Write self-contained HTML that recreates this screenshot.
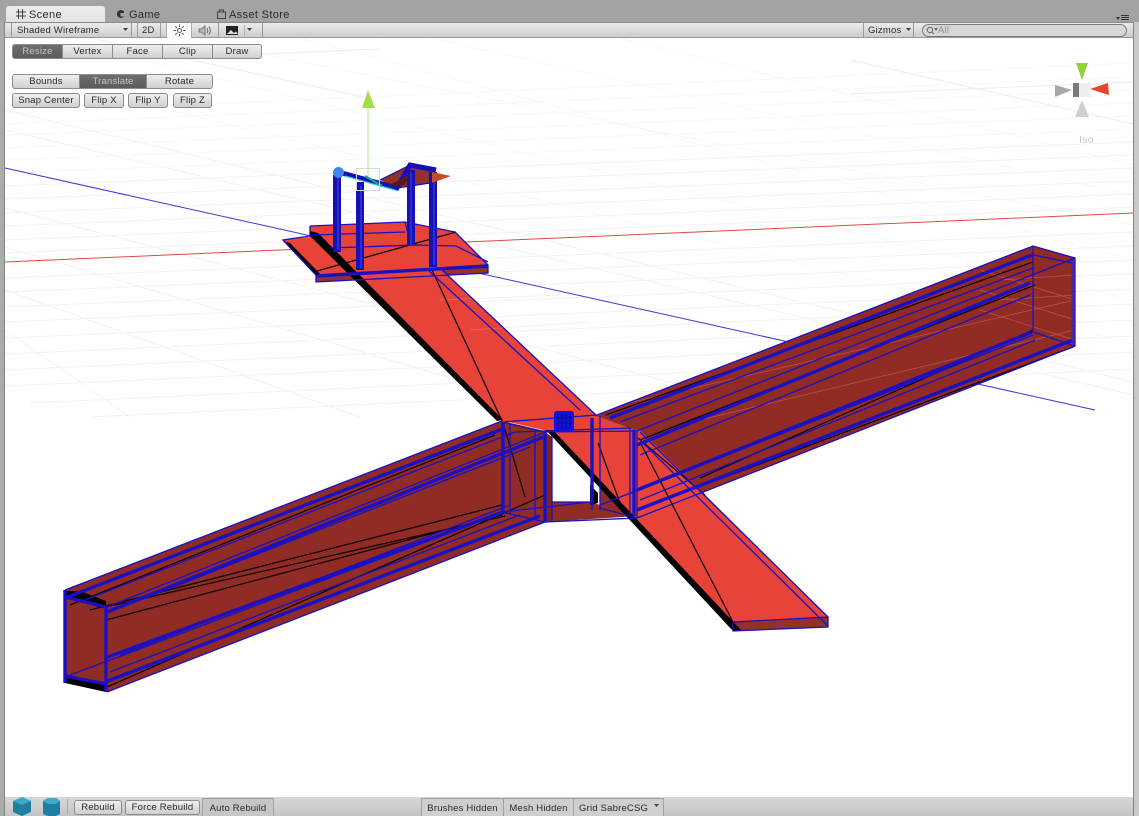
<!DOCTYPE html>
<html><head><meta charset="utf-8"><style>
html,body{margin:0;padding:0;background:#a3a3a3}
#r{position:relative;width:1139px;height:816px;overflow:hidden;background:#a3a3a3;font-family:"Liberation Sans",sans-serif;font-size:9.5px;color:#2a2a2a;letter-spacing:.2px}
.a{position:absolute;box-sizing:border-box;white-space:nowrap}
.b{position:absolute;box-sizing:border-box;text-align:center;background:linear-gradient(#efefef,#cfcfcf);border:1px solid #8c8c8c;white-space:nowrap;line-height:14px}
.d{background:linear-gradient(#6e6e6e,#5c5c5c);color:#c4c4c4}
.t{position:absolute;font-size:11px;color:#2a2a2a;top:9px;letter-spacing:.35px}
.s{position:absolute;width:1px;background:#9a9a9a}
</style></head><body><div id="r">
<svg class="a" style="left:0;top:0" width="1139" height="816" viewBox="0 0 1139 816">
<rect x="5" y="38" width="1128" height="760" fill="#fff"/>
<g fill="none" stroke="#f8f8f8" stroke-width="1">
<path d="M5 113L1133 63M5 124L1133 77M5 135L1133 90M5 148L1133 103M5 160L1133 116M5 173L1133 129"/>
<path d="M300 38L1133 260M120 55L1133 300M5 70L1133 344M180 38L1133 225M430 38L1133 195M620 38L1133 165"/>
</g>
<g fill="none" stroke="#f2f2f2" stroke-width="1">
<path d="M5 186L1133 142M5 199L1133 155M5 213L1133 168M5 226L1133 181M5 240L1133 194M5 253L1133 207M5 278L1133 232M5 292L1133 246M5 307L1133 260M5 322L1133 274M5 338L1133 289M5 354L1133 304M5 370L1133 320M5 386L1133 336M30 403L1133 352M90 417L1133 369"/>
<path d="M5 110L1133 382M5 130L1133 395M5 208L700 390M5 247L560 410M5 290L360 417M5 330L130 417"/>
</g>
<path d="M90 38L363 97M850 60L1133 124M262 54L380 49M850 94L1133 82" stroke="#ececec" stroke-width="1" fill="none"/>
<path d="M5 168L1095 410" stroke="#3a36d8" stroke-width="1" fill="none"/>
<path d="M5 262L1133 213" stroke="#e04a40" stroke-width="1" fill="none"/>
<!-- left tube -->
<polygon points="65,590 502,421 545,431 545,522 107,692 65,680" fill="#912b25"/>
<!-- right tube -->
<polygon points="597,415 1033,246 1075,258 1075,346 637,518 600,505" fill="#912b25"/>
<!-- plates -->
<polygon points="310,226 405,222 455,232 488,265 316,276 283,240 310,237" fill="#e74339"/>
<polygon points="316,275 488,265 488,273 316,282" fill="#92302a"/>
<!-- strip -->
<polygon points="320,235 440,268 597,416 640,432 552,432 500,420" fill="#e74339"/>
<polygon points="548,430 640,430 828,617 733,622" fill="#e74339"/>
<polygon points="733,622 828,617 828,627 733,631" fill="#92302a"/>
<!-- white hole -->
<polygon points="552,446 552,502 590,502 590,486" fill="#fff"/>
<polygon points="545,502 590,502 637,516 545,522" fill="#912b25"/>
<polygon points="502,422 545,432 545,522 502,512" fill="#912b25"/>
<polygon points="545,432 552,437 552,522 545,522" fill="#7e2620"/>
<!-- faint grid on surface -->
<path d="M440 300L560 295M470 330L590 322M620 405L1075 300M700 420L1075 330M980 270L1075 300M980 290L1075 320M980 310L1075 340M1000 280L1075 275M1000 300L1075 295" stroke="#ffb0a0" stroke-width=".7" fill="none" opacity=".35"/>
<!-- black edges -->
<g fill="#000">
<polygon points="310,231 318,233 503,420 497,421 310,236"/>
<polygon points="283,241 290,243 322,276 316,276"/>
<polygon points="546,430 553,430 741,630 733,631"/>
<polygon points="65,591 80,591 106,601 106,609 65,598"/>
<polygon points="65,676 106,684 106,692 65,683"/>
<polygon points="590,485 598,493 598,503 590,505"/>
</g>
<!-- black triangulation -->
<g fill="none" stroke="#150505" stroke-width="1.3">
<path d="M432 270L503 423L525 497M598 443L620 503M640 442L733 622M317 271L456 232"/>
<path d="M70 605L495 435M106 620L502 515M106 607L505 516M90 610L502 505M100 690L545 495"/>
<path d="M606 415L1033 262M640 440L1035 285M700 478L1033 330M650 505L1073 347"/>
<path d="M638 438L705 495"/>
</g>
<!-- blue wires: thin -->
<g fill="none" stroke="#1a10c4" stroke-width="1.3">
<path d="M65 590L502 421M107 692L545 522M70 675L503 513M107 607L543 433M85 600L515 432M120 608L530 447M120 655L510 505M110 672L520 515"/>
<path d="M597 415L1033 246L1075 258L1075 346L637 518M1033 246L1033 332L1075 346M637 431L1075 258M600 505L1033 335M1033 255L1073 263M620 422L1033 268M640 455L1030 295M640 500L1035 340"/>
<path d="M310 226L405 222L455 232L488 265L488 273L316 282L316 275L283 240L310 236M310 226L310 236M312 235L405 232M405 222L410 242M330 248L415 245L456 246L488 262"/>
<path d="M428 270L580 410M440 268L597 416M640 432L828 617M640 440L828 626M733 622L828 617L828 627L733 631L733 622"/>
<path d="M502 422L502 512L545 522L545 432L502 422M510 424L510 514M535 430L535 518M552 436L552 522M592 418L592 510M600 416L600 510M630 428L630 514M637 431L637 518M502 422L597 415M545 432L637 431M515 432L630 428M552 502L590 502M502 512L590 502M545 522L637 518M600 508L637 518"/>
</g>
<!-- blue wires: thick -->
<g fill="none" stroke="#1a10c4" stroke-width="3.4">
<path d="M65 598L505 428M107 612L543 437M105 658L503 512M105 682L540 516"/>
<path d="M610 418L1032 255M637 445L1030 283M637 490L1032 332M637 510L1073 340"/>
<path d="M65 590L65 683M106 607L106 692M65 597L106 607M65 676L106 684"/>
<path d="M545 432L545 522M592 418L592 505M634 430L634 516M503 422L503 512M316 276L488 266"/>
</g>
<path d="M1073 260V345" stroke="#4a2a9a" stroke-width="3" fill="none"/>
<!-- upper structure -->
<polygon points="380,180 410,165 397,188" fill="#92302a"/>
<polygon points="410,165 436,170 430,183 397,188" fill="#92302a"/>
<g fill="none" stroke="#1510b8">
<path d="M337 175V252M360 182V270M411 170V245M433 172V267" stroke-width="8"/>
<path d="M338 172L397 188L410 165L436 170" stroke-width="5"/>
<path d="M380 180L410 165M397 188L430 183" stroke-width="1.2"/>
</g>
<path d="M338 178V250M361 186V268M411 172V245M434 176V265" stroke="#5a58d8" stroke-width=".8" fill="none"/>
<path d="M345 176L395 190" stroke="#30c8d8" stroke-width="1.2" fill="none"/>
<path d="M365 176L382 186" stroke="#20a090" stroke-width="2.4" fill="none"/>
<path d="M388 186L410 174L405 185Z" fill="#5a1a18"/>
<rect x="356.500" y="168.500" width="23" height="22" fill="none" stroke="#d8d8d8" stroke-width="1"/>
<path d="M368 108V176" stroke="#b2e88a" stroke-width="1" fill="none"/>
<polygon points="368,90 375,108 362,108" fill="#a3dd4a"/>
<circle cx="338.500" cy="172.500" r="5.500" fill="#3d86ee"/>
<polygon points="432,172 451,176 432,183" fill="#c74a28"/>
<!-- centre handle -->
<rect x="554" y="411" width="20" height="21" rx="3" fill="#1210dc"/>
<path d="M558 414V429M562 414V429M566 414V429M570 414V429M556 418H572M556 423H572" stroke="#0a0a90" stroke-width="1" fill="none"/>
<!-- scene gizmo -->
<polygon points="1076,63 1088,63 1082,80" fill="#8fd43a"/>
<polygon points="1090,89 1108,83 1109,95" fill="#e8452a"/>
<polygon points="1055,85 1072,90 1055,97" fill="#a8a8a8"/>
<polygon points="1082,100 1075,117 1089,117" fill="#cfcfcf"/>
<rect x="1073" y="83" width="6" height="14" fill="#7a7a7a"/>
<rect x="1079" y="83" width="12" height="14" fill="#ededf2"/>
</svg>
<div class="a" style="left:1079px;top:134px;font-size:10.5px;color:#c6c6c6">Iso</div>

<!-- side frames -->
<div class="a" style="left:0;top:22px;width:5px;height:776px;background:#ababab;border-right:1.5px solid #858585"></div>
<div class="a" style="left:1133px;top:22px;width:6px;height:794px;background:#c8c8c8;border-left:1.5px solid #858585"></div>

<!-- tabs -->
<div class="a" style="left:6px;top:6px;width:99px;height:17px;background:linear-gradient(#ececec,#e2e2e2);border-radius:3px 3px 0 0"></div>
<svg class="a" style="left:15px;top:8px" width="12" height="12"><path d="M3.500 1V11M7.500 1V11M1 4H11M1 8H11" stroke="#444" fill="none"/></svg>
<div class="t" style="left:29px">Scene</div>
<svg class="a" style="left:115px;top:9px" width="11" height="11"><path d="M9 2.500A4 4 0 1 0 9 7.500H5.500V4H9Z" fill="#333"/></svg>
<div class="t" style="left:129px">Game</div>
<svg class="a" style="left:216px;top:8px" width="11" height="12"><path d="M1.500 4H9.500V10.500H1.500Z" fill="none" stroke="#444"/><path d="M3.500 4V2H7.500V4" fill="none" stroke="#444"/></svg>
<div class="t" style="left:229px">Asset Store</div>
<svg class="a" style="left:1116px;top:14px" width="14" height="8"><path d="M0 3H4L2 6Z" fill="#333"/><path d="M5 1.500H13M5 3.500H13M5 5.500H13" stroke="#333"/></svg>

<!-- toolbar -->
<div class="a" style="left:5px;top:22px;width:1128px;height:16px;background:linear-gradient(#ebebeb,#cdcdcd);border-top:1px solid #8a8a8a;border-bottom:1px solid #979797"></div>
<div class="s" style="left:11px;top:23px;height:14px"></div>
<div class="a" style="left:17px;top:25px">Shaded Wireframe</div>
<svg class="a" style="left:123px;top:28px" width="6" height="4"><path d="M0 0H5L2.500 3Z" fill="#444"/></svg>
<div class="s" style="left:131px;top:23px;height:14px"></div>
<div class="s" style="left:137px;top:23px;height:14px"></div>
<div class="a" style="left:142px;top:25px">2D</div>
<div class="s" style="left:160px;top:23px;height:14px"></div>
<div class="a" style="left:166px;top:23px;width:26px;height:15px;background:#fbfbfb;border-left:1px solid #aaa;border-right:1px solid #aaa"></div>
<svg class="a" style="left:173px;top:24px" width="13" height="13"><circle cx="6.500" cy="6.500" r="2" fill="none" stroke="#555"/><path d="M6.500 0.500V3M6.500 10V12.500M0.500 6.500H3M10 6.500H12.500M2.300 2.300L4 4M9 9L10.700 10.700M2.300 10.700L4 9M9 4L10.700 2.300" stroke="#555" fill="none"/></svg>
<svg class="a" style="left:198px;top:24px" width="15" height="13"><path d="M1 5H3.500L7 2V11L3.500 8H1Z" fill="#bbb" stroke="#777"/><path d="M9 4Q10.500 6.500 9 9M11 2.500Q13.500 6.500 11 10.500" fill="none" stroke="#666"/></svg>
<div class="s" style="left:218px;top:23px;height:14px"></div>
<svg class="a" style="left:226px;top:26px" width="13" height="10"><rect width="12" height="9" fill="#222"/><path d="M1 8L5 4L8 7L10 5.500L12 8Z" fill="#ddd"/></svg>
<div class="s" style="left:244px;top:25px;height:11px;background:#b4b4b4"></div>
<svg class="a" style="left:247px;top:28px" width="6" height="4"><path d="M0 0H5L2.500 3Z" fill="#444"/></svg>
<div class="s" style="left:262px;top:23px;height:14px"></div>
<div class="s" style="left:863px;top:23px;height:14px"></div>
<div class="a" style="left:868px;top:25px">Gizmos</div>
<svg class="a" style="left:906px;top:28px" width="6" height="4"><path d="M0 0H5L2.500 3Z" fill="#444"/></svg>
<div class="s" style="left:913px;top:23px;height:14px"></div>
<div class="a" style="left:922px;top:24px;width:205px;height:13px;border-radius:7px;background:#d6d6d6;border:1px solid #7c7c7c"></div>
<svg class="a" style="left:926px;top:26px" width="12" height="9"><circle cx="4" cy="4" r="2.700" fill="none" stroke="#666"/><path d="M6 6L8 8" stroke="#666"/><path d="M8 2H12L10 5Z" fill="#666"/></svg>
<div class="a" style="left:938px;top:24.500px;color:#8e8e8e">All</div>

<!-- scene buttons -->
<div class="b d" style="left:12px;top:44px;width:51px;height:15px;border-radius:3px 0 0 3px">Resize</div>
<div class="b" style="left:62px;top:44px;width:51px;height:15px">Vertex</div>
<div class="b" style="left:112px;top:44px;width:51px;height:15px">Face</div>
<div class="b" style="left:162px;top:44px;width:51px;height:15px">Clip</div>
<div class="b" style="left:212px;top:44px;width:50px;height:15px;border-radius:0 3px 3px 0">Draw</div>

<div class="b" style="left:12px;top:74px;width:68px;height:15px;border-radius:3px 0 0 3px">Bounds</div>
<div class="b d" style="left:79px;top:74px;width:68px;height:15px">Translate</div>
<div class="b" style="left:146px;top:74px;width:67px;height:15px;border-radius:0 3px 3px 0">Rotate</div>

<div class="b" style="left:12px;top:93px;width:68px;height:15px;border-radius:3px">Snap Center</div>
<div class="b" style="left:84px;top:93px;width:40px;height:15px;border-radius:3px">Flip X</div>
<div class="b" style="left:128px;top:93px;width:40px;height:15px;border-radius:3px">Flip Y</div>
<div class="b" style="left:173px;top:93px;width:39px;height:15px;border-radius:3px">Flip Z</div>

<!-- bottom bar -->
<div class="a" style="left:0;top:797px;width:1133px;height:19px;background:linear-gradient(#d8d8d8,#c4c4c4)"></div>
<div class="a" style="left:0;top:797px;width:5px;height:19px;background:#ababab;border-right:1.5px solid #858585"></div>
<svg class="a" style="left:10px;top:797px" width="52" height="19"><polygon points="12,0 21,4 21,15 12,19 3,15 3,4" fill="#1f7fa3"/><polygon points="12,0 21,4 12,8 3,4" fill="#3fa9c9"/><polygon points="33,4 38,1 46,1 50,4 50,17 46,19 38,19 33,17" fill="#1f7fa3"/><polygon points="33,4 38,1 46,1 50,4 46,7 38,7" fill="#3fa9c9"/></svg>
<div class="s" style="left:67px;top:799px;height:15px;background:#a8a8a8"></div>
<div class="b" style="left:74px;top:800px;width:48px;height:15px;border-radius:3px">Rebuild</div>
<div class="b" style="left:125px;top:800px;width:75px;height:15px;border-radius:3px">Force Rebuild</div>
<div class="a" style="left:202px;top:798px;width:72px;height:18px;line-height:19px;text-align:center;background:#c6c6c6;border:1px solid #a0a0a0;border-bottom:0">Auto Rebuild</div>
<div class="a" style="left:421px;top:798px;width:83px;height:18px;line-height:19px;text-align:center;background:#cfcfcf;border:1px solid #a0a0a0;border-bottom:0">Brushes Hidden</div>
<div class="a" style="left:503px;top:798px;width:71px;height:18px;line-height:19px;text-align:center;background:#cfcfcf;border:1px solid #a0a0a0;border-bottom:0">Mesh Hidden</div>
<div class="a" style="left:573px;top:798px;width:91px;height:18px;line-height:19px;padding-left:5px;background:#cfcfcf;border:1px solid #a0a0a0;border-bottom:0">Grid SabreCSG</div>
<svg class="a" style="left:654px;top:804px" width="6" height="4"><path d="M0 0H5L2.500 3Z" fill="#444"/></svg>
</div></body></html>
